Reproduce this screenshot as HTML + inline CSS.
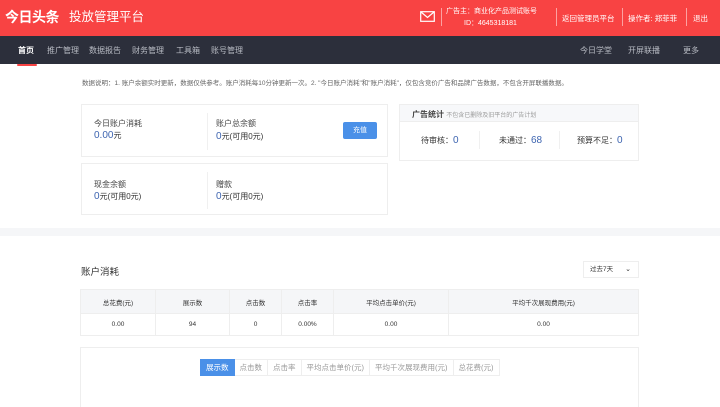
<!DOCTYPE html>
<html><head><meta charset="utf-8"><style>
*{margin:0;padding:0;box-sizing:border-box}
body{width:720px;height:404px;overflow:hidden;background:#fff;font-family:"Liberation Sans","Noto Sans CJK SC",sans-serif;color:#333;position:relative}
.hd{position:absolute;left:0;top:0;width:720px;height:36px;background:#f84343;color:#fff}
.logo{position:absolute;left:5px;top:8px;font-size:14px;font-weight:bold;letter-spacing:-0.5px;line-height:18px}
.sub{position:absolute;left:69px;top:9px;font-size:12.5px;line-height:17px}
.nav{position:absolute;left:0;top:36px;width:720px;height:28px;background:#2c2f3b;font-size:8px;color:#b9bcc4}
.nav span{position:absolute;top:9px}
.sep{position:absolute;top:8px;width:1px;height:18px;background:rgba(255,255,255,.5)}
.t{position:absolute;font-size:7px;color:#555;white-space:nowrap}
.card{position:absolute;border:1px solid #eee;background:#fff}
.lbl{position:absolute;font-size:8px;color:#444;white-space:nowrap}
.val{position:absolute;font-size:8px;color:#333;white-space:nowrap}
.val b{font-weight:normal;color:#3d64b0;font-size:10px}
.vl{position:absolute;width:1px;background:#f0f0f0}
table{position:absolute;left:80px;top:289px;width:559px;border-collapse:collapse;font-size:6.5px;color:#333}
td{border:1px solid #eee;text-align:center;height:22px}
tr:first-child td{background:#f5f6f8;height:24px}
.tabs{position:absolute;top:359px;left:200px;height:17px;display:flex;font-size:7.5px;color:#999}
.tabs div{border:1px solid #eee;border-left:none;padding:0 5px;line-height:15px}
</style></head><body>
<div class="hd">
<div class="logo">今日头条</div><div class="sub">投放管理平台</div>
<svg style="position:absolute;left:420px;top:11px" width="15" height="11" viewBox="0 0 15 11"><rect x="0.7" y="0.7" width="13.6" height="9.6" fill="none" stroke="#fff" stroke-width="1.2"/><path d="M1 1 L7.5 6.5 L14 1" fill="none" stroke="#fff" stroke-width="1.2"/></svg>
<div class="sep" style="left:441px"></div>
<div class="t" style="left:446px;top:6px;color:#fff">广告主：商业化产品测试账号</div>
<div class="t" style="left:464px;top:18px;color:#fff">ID：4645318181</div>
<div class="sep" style="left:556px"></div>
<div class="t" style="left:562px;top:13px;color:#fff;font-size:7.5px">返回管理员平台</div>
<div class="sep" style="left:622px"></div>
<div class="t" style="left:628px;top:13px;color:#fff;font-size:7.5px">操作者: 郑菲菲</div>
<div class="sep" style="left:686px"></div>
<div class="t" style="left:693px;top:13px;color:#fff;font-size:7.5px">退出</div>
</div>
<div class="nav">
<span style="left:18px;color:#fff;font-weight:bold">首页</span>
<span style="left:47px">推广管理</span><span style="left:89px">数据报告</span><span style="left:132px">财务管理</span><span style="left:176px">工具箱</span><span style="left:211px">账号管理</span>
<span style="left:580px">今日学堂</span><span style="left:628px">开屏联播</span><span style="left:683px">更多</span>
</div>
<div style="position:absolute;left:17px;top:64px;width:20px;height:2px;background:#f84343;border-radius:1px"></div>
<div class="t" style="left:82px;top:77px;font-size:6.5px;color:#666">数据说明：1. 账户余额实时更新，数据仅供参考。账户消耗每10分钟更新一次。2. "今日账户消耗"和"账户消耗"，仅包含竞价广告和品牌广告数据，不包含开屏联播数据。</div>
<div class="card" style="left:81px;top:104px;width:307px;height:53px">
<div class="lbl" style="left:12px;top:13px">今日账户消耗</div><div class="val" style="left:12px;top:25px"><b>0.00</b>元</div>
<div class="vl" style="left:125px;top:8px;height:37px"></div>
<div class="lbl" style="left:134px;top:13px">账户总余额</div><div class="val" style="left:134px;top:26px"><b>0</b>元(可用0元)</div>
<div style="position:absolute;left:261px;top:17px;width:34px;height:17px;background:#4a90e8;color:#fff;font-size:7px;text-align:center;line-height:17px;border-radius:2px">充值</div>
</div>
<div class="card" style="left:81px;top:163px;width:307px;height:52px">
<div class="lbl" style="left:12px;top:15px">现金余额</div><div class="val" style="left:12px;top:27px"><b>0</b>元(可用0元)</div>
<div class="vl" style="left:125px;top:8px;height:37px"></div>
<div class="lbl" style="left:134px;top:15px">赠款</div><div class="val" style="left:134px;top:27px"><b>0</b>元(可用0元)</div>
</div>
<div class="card" style="left:399px;top:104px;width:240px;height:57px">
<div style="position:absolute;left:0;top:0;width:238px;height:17px;background:#f7f8fa;border-bottom:1px solid #eee"></div>
<div class="lbl" style="left:12px;top:4px;font-weight:bold">广告统计 <span style="font-weight:normal;font-size:6px;color:#999">不包含已删除及旧平台的广告计划</span></div>
<div class="val" style="left:21px;top:30px">待审核：<b>0</b></div>
<div class="vl" style="left:79px;top:26px;height:18px"></div>
<div class="val" style="left:99px;top:30px">未通过：<b>68</b></div>
<div class="vl" style="left:159px;top:26px;height:18px"></div>
<div class="val" style="left:177px;top:30px">预算不足：<b>0</b></div>
</div>
<div style="position:absolute;left:0;top:228px;width:720px;height:8px;background:#f5f6f8"></div>
<div class="lbl" style="left:81px;top:264px;font-size:9.5px;color:#333">账户消耗</div>
<div style="position:absolute;left:583px;top:261px;width:56px;height:17px;border:1px solid #eee;font-size:6.5px;line-height:15px;padding-left:6px;color:#333">过去7天<span style="position:absolute;right:7px;top:0;font-size:7px">⌄</span></div>
<table>
<tr><td style="width:75px">总花费(元)</td><td style="width:74px">展示数</td><td style="width:52px">点击数</td><td style="width:52px">点击率</td><td style="width:115px">平均点击单价(元)</td><td>平均千次展现费用(元)</td></tr>
<tr><td>0.00</td><td>94</td><td>0</td><td>0.00%</td><td>0.00</td><td>0.00</td></tr>
</table>
<div class="card" style="left:80px;top:347px;width:559px;height:60px;border-bottom:none"></div>
<div class="tabs"><div style="background:#4a90e8;color:#fff;border:1px solid #4a90e8">展示数</div><div>点击数</div><div>点击率</div><div>平均点击单价(元)</div><div>平均千次展现费用(元)</div><div>总花费(元)</div></div>
</body></html>
